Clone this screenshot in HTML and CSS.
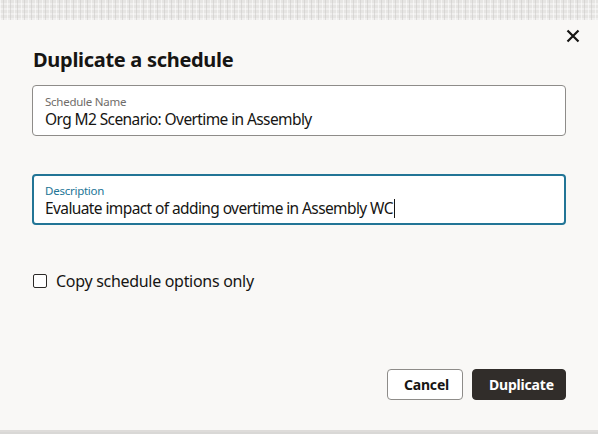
FILE: index.html
```html
<!DOCTYPE html>
<html>
<head>
<meta charset="utf-8">
<link rel="stylesheet" href="styles.css">
</head>
<body>
<div class="backdrop"></div>
<div class="dialog">
  <button class="close" aria-label="Close">
    <svg width="14" height="14" viewBox="0 0 14 14"><path d="M1.5 1.5 L12.5 12.5 M12.5 1.5 L1.5 12.5" stroke="#161513" stroke-width="2.2" stroke-linecap="butt"/></svg>
  </button>
  <h1 class="title">Duplicate a schedule</h1>
  <div class="field">
    <label class="field-label">Schedule Name</label>
    <div class="field-value">Org M2 Scenario: Overtime in Assembly</div>
  </div>
  <div class="field focused">
    <label class="field-label">Description</label>
    <div class="field-value">Evaluate impact of adding overtime in Assembly WC<span class="caret"></span></div>
  </div>
  <label class="check">
    <span class="box"></span>
    <span>Copy schedule options only</span>
  </label>
  <div class="footer">
    <button class="btn btn-secondary">Cancel</button>
    <button class="btn btn-primary">Duplicate</button>
  </div>
</div>
</body>
</html>
```

FILE: styles.css
```css
* { box-sizing: border-box; }
html, body { margin: 0; padding: 0; }
body {
  width: 598px;
  height: 434px;
  overflow: hidden;
  background: #d9d8d6;
  font-family: "Noto Sans", "Open Sans", sans-serif;
  color: #161513;
}
.backdrop {
  height: 20px;
  background-color: #e6e5e3;
  background-image:
    repeating-linear-gradient(90deg, rgba(255,255,255,0.55) 0 1px, transparent 1px 3px, rgba(200,198,196,0.5) 3px 4px, transparent 4px 7px),
    repeating-linear-gradient(0deg, rgba(255,255,255,0.4) 0 2px, transparent 2px 5px);
}
.dialog {
  position: relative;
  height: 412px;
  background: #f9f8f6;
  padding: 27px 32px 0 32px;
  border-bottom: 2px solid #dedcda;
}
.close {
  position: absolute;
  top: 8px;
  right: 17px;
  width: 16px;
  height: 16px;
  padding: 0;
  border: 0;
  background: none;
  display: flex;
  align-items: center;
  justify-content: center;
}
.title {
  margin: 0 0 12px 1px;
  font-size: 20px;
  line-height: 26px;
  font-weight: 700;
  letter-spacing: -0.3px;
}
.field {
  height: 51px;
  background: #fff;
  border: 1px solid #8e8c89;
  border-radius: 4px;
  padding: 9px 12px 0 12px;
  margin-bottom: 38px;
  display: flex;
  flex-direction: column;
}
.field-label {
  font-size: 11.5px;
  line-height: 14px;
  color: #6f6c69;
  letter-spacing: -0.25px;
}
.field-value {
  font-size: 15.5px;
  line-height: 20px;
  letter-spacing: -0.6px;
  color: #161513;
}
.focused {
  border: 2px solid #227596;
  padding: 8px 11px 0 11px;
  margin-bottom: 0;
}
.focused .field-label { color: #227596; }
.caret {
  display: inline-block;
  width: 1px;
  height: 19px;
  margin-left: 1px;
  background: #161513;
  vertical-align: -4px;
}
.check {
  display: flex;
  align-items: center;
  gap: 9px;
  margin: 45px 0 0 1px;
  font-size: 16px;
  letter-spacing: -0.3px;
}
.box {
  width: 14px;
  height: 14px;
  border: 1.5px solid #2b2926;
  border-radius: 2px;
  background: #fff;
}
.footer {
  display: flex;
  justify-content: flex-end;
  gap: 9px;
  margin-top: 77px;
}
.btn {
  height: 31px;
  border-radius: 4px;
  font-family: inherit;
  font-size: 14px;
  font-weight: 700;
  letter-spacing: -0.2px;
  padding: 0 16px;
}
.btn-secondary {
  width: 76px;
  background: #fff;
  border: 1px solid #8e8c89;
  color: #161513;
}
.btn-primary {
  width: 94px;
  background: #312d2a;
  border: 1px solid #312d2a;
  color: #fff;
}
```
